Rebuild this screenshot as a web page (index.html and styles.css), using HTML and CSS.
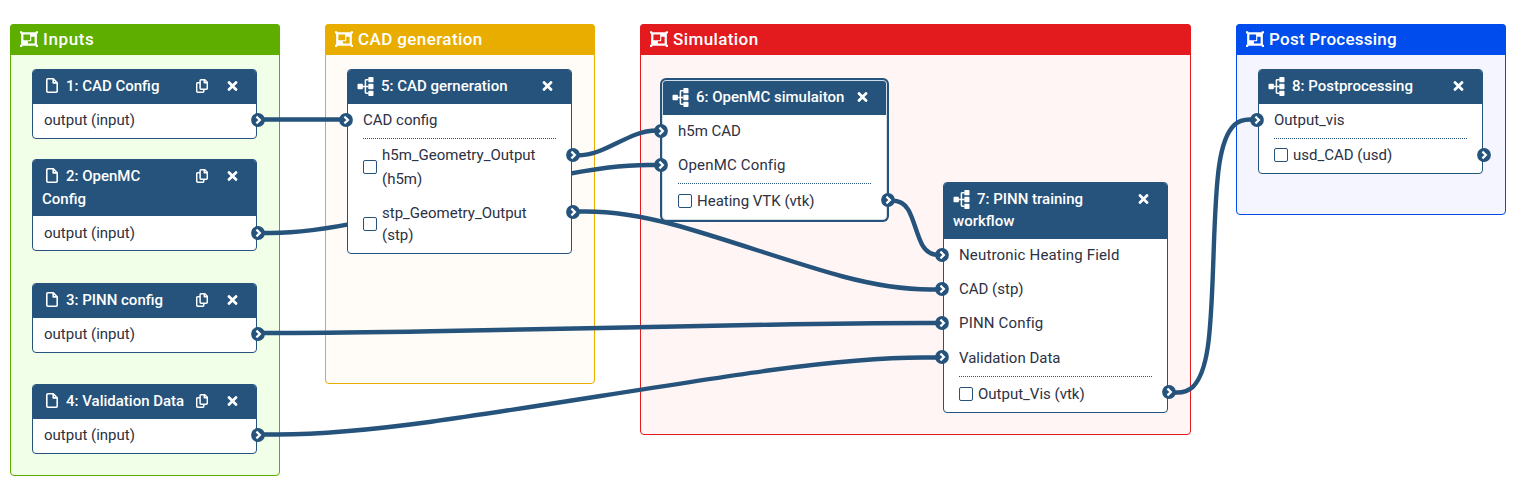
FILE: index.html
```
<!DOCTYPE html>
<html lang="en">
<head>
<meta charset="utf-8">
<title>Workflow editor</title>
<link rel="stylesheet" href="styles.css">
</head>
<body>
<svg class="defs" aria-hidden="true">
  <symbol id="group" viewBox="0 32 512 448"><path fill="currentColor" d="M480 128V96h20c6.627 0 12-5.373 12-12V44c0-6.627-5.373-12-12-12h-40c-6.627 0-12 5.373-12 12v20H64V44c0-6.627-5.373-12-12-12H12C5.373 32 0 37.373 0 44v40c0 6.627 5.373 12 12 12h20v320H12c-6.627 0-12 5.373-12 12v40c0 6.627 5.373 12 12 12h40c6.627 0 12-5.373 12-12v-20h384v20c0 6.627 5.373 12 12 12h40c6.627 0 12-5.373 12-12v-40c0-6.627-5.373-12-12-12h-20V128zM96 276V140c0-6.627 5.373-12 12-12h168c6.627 0 12 5.373 12 12v136c0 6.627-5.373 12-12 12H108c-6.627 0-12-5.373-12-12zm320 96c0 6.627-5.373 12-12 12H236c-6.627 0-12-5.373-12-12v-52h72c13.255 0 24-10.745 24-24V192h84c6.627 0 12 5.373 12 12v168z"/></symbol>
  <symbol id="file" viewBox="0 0 12 15"><path fill="none" stroke="currentColor" stroke-width="1.600" stroke-linejoin="round" d="M1.900.8H7.300L11.200 4.700V13.200Q11.200 14.200 10.200 14.200H1.900Q.8 14.200.8 13.200V1.800Q.8.8 1.900.8ZM7.200 1V4.900H11"/></symbol>
  <symbol id="copy" viewBox="0 0 12 14"><path fill="none" stroke="currentColor" stroke-width="1.500" stroke-linejoin="round" d="M5 .8H8.800L11.300 3.300V9.300Q11.300 10.200 10.400 10.200H5Q4.100 10.200 4.100 9.300V1.700Q4.100.8 5 .8ZM8.300 1V3.800H11M4 3.700H1.600Q.7 3.700.7 4.600V12.300Q.7 13.200 1.600 13.200H6.900Q7.800 13.200 7.800 12.300V10.300"/></symbol>
  <symbol id="times" viewBox="0 80 352 352"><path fill="currentColor" d="M242.720 256l100.070-100.070c12.280-12.280 12.280-32.190 0-44.480l-22.240-22.240c-12.280-12.280-32.190-12.280-44.480 0L176 189.280 75.930 89.210c-12.280-12.280-32.190-12.280-44.480 0L9.210 111.450c-12.280 12.280-12.280 32.190 0 44.480L109.280 256 9.210 356.070c-12.280 12.280-12.280 32.190 0 44.480l22.240 22.240c12.280 12.280 32.200 12.280 44.480 0L176 322.720l100.070 100.070c12.280 12.280 32.200 12.280 44.480 0l22.240-22.240c12.280-12.280 12.280-32.190 0-44.480L242.720 256z"/></symbol>
  <symbol id="tree" viewBox="0 0 16 19"><g fill="currentColor"><rect x="0" y="6.800" width="5.400" height="5.400" rx=".9"/><rect x="10.800" y="0" width="5.200" height="5.300" rx=".9"/><rect x="10.800" y="6.800" width="5.200" height="5.400" rx=".9"/><rect x="10.800" y="13.700" width="5.200" height="5.300" rx=".9"/></g><path fill="none" stroke="currentColor" stroke-width="1.500" d="M5 9.500H11M11 2.700H8.600Q7.900 2.700 7.900 3.400V15.600Q7.900 16.300 8.600 16.300H11"/></symbol>
  <symbol id="port" viewBox="0 0 14 14"><circle cx="7" cy="7" r="6.900" fill="#25537b"/><path fill="none" stroke="#fff" stroke-width="2.200" d="M5.400 3.600L8.900 7L5.400 10.400"/></symbol>
</svg>
<main class="canvas">
  <section class="frame inputs"><h2><svg><use href="#group"/></svg><span>Inputs</span></h2></section>
  <section class="frame cad"><h2><svg><use href="#group"/></svg><span>CAD generation</span></h2></section>
  <section class="frame simulation"><h2><svg><use href="#group"/></svg><span>Simulation</span></h2></section>
  <section class="frame post"><h2><svg><use href="#group"/></svg><span>Post Processing</span></h2></section>

  <svg class="edges" viewBox="0 0 1524 504">
    <path d="M258 119.500H346"/>
    <path d="M258 233H270.500C283 233 308 233 362.700 221.700C417.300 210.300 501.700 187.700 556.300 176.300C611 165 636 165 648.500 165H661"/>
    <path d="M573 155.500H576.700C580.300 155.500 587.700 155.500 598.700 151.300C609.700 147.200 624.300 138.800 635.300 134.700C646.300 130.500 653.700 130.500 657.300 130.500H661"/>
    <path d="M573 211.500H585.800C598.700 211.500 624.300 211.500 673.200 224.500C722 237.500 794 263.500 842.800 276.500C891.700 289.500 917.300 289.500 930.200 289.500H943"/>
    <path d="M258 333H277.700C297.300 333 336.700 333 431.200 331.300C525.700 329.700 675.300 326.300 769.800 324.700C864.300 323 903.700 323 923.300 323H943"/>
    <path d="M258 434.500H277.700C297.300 434.500 336.700 434.500 431.200 421.700C525.700 408.800 675.300 383.200 769.800 370.300C864.300 357.500 903.700 357.500 923.300 357.500H943"/>
    <path d="M888 200.500H891.700C895.300 200.500 902.700 200.500 908.200 209.600C913.700 218.700 917.300 236.800 922.800 245.900C928.300 255 935.700 255 939.300 255H943"/>
    <path d="M1169 392.500H1177C1185 392.500 1201 392.500 1207.800 347C1214.700 301.500 1212.300 210.500 1219.200 165C1226 119.500 1242 119.500 1250 119.500H1258"/>
  </svg>

  <article class="node source n1">
    <header><div class="tools"><svg class="copy"><use href="#copy"/></svg><svg class="times"><use href="#times"/></svg></div><svg class="file"><use href="#file"/></svg><span>1: CAD Config</span></header>
    <div class="row"><span>output (input)</span><svg class="port out"><use href="#port"/></svg></div>
  </article>
  <article class="node source two-line n2">
    <header><div class="tools"><svg class="copy"><use href="#copy"/></svg><svg class="times"><use href="#times"/></svg></div><svg class="file"><use href="#file"/></svg><span>2: OpenMC<br>Config</span></header>
    <div class="row"><span>output (input)</span><svg class="port out"><use href="#port"/></svg></div>
  </article>
  <article class="node source n3">
    <header><div class="tools"><svg class="copy"><use href="#copy"/></svg><svg class="times"><use href="#times"/></svg></div><svg class="file"><use href="#file"/></svg><span>3: PINN config</span></header>
    <div class="row"><span>output (input)</span><svg class="port out"><use href="#port"/></svg></div>
  </article>
  <article class="node source n4">
    <header><div class="tools"><svg class="copy"><use href="#copy"/></svg><svg class="times"><use href="#times"/></svg></div><svg class="file"><use href="#file"/></svg><span>4: Validation Data</span></header>
    <div class="row"><span>output (input)</span><svg class="port out"><use href="#port"/></svg></div>
  </article>

  <article class="node n5">
    <header><div class="tools"><svg class="times"><use href="#times"/></svg></div><svg class="tree"><use href="#tree"/></svg><span>5: CAD gerneration</span></header>
    <div class="row"><svg class="port in"><use href="#port"/></svg><span>CAD config</span></div>
    <hr>
    <div class="row tall"><i class="check"></i><span>h5m_Geometry_Output<br>(h5m)</span><svg class="port out"><use href="#port"/></svg></div>
    <div class="row tall second"><i class="check"></i><span>stp_Geometry_Output<br>(stp)</span><svg class="port out"><use href="#port"/></svg></div>
  </article>

  <article class="node active n6">
    <header><div class="tools"><svg class="times"><use href="#times"/></svg></div><svg class="tree"><use href="#tree"/></svg><span>6: OpenMC simulaiton</span></header>
    <div class="row"><svg class="port in"><use href="#port"/></svg><span>h5m CAD</span></div>
    <div class="row"><svg class="port in"><use href="#port"/></svg><span class="wide">OpenMC Config</span></div>
    <hr>
    <div class="row last"><i class="check"></i><span>Heating VTK (vtk)</span><svg class="port out"><use href="#port"/></svg></div>
  </article>

  <article class="node two-line n7">
    <header><div class="tools"><svg class="times"><use href="#times"/></svg></div><svg class="tree"><use href="#tree"/></svg><span>7: PINN training<br>workflow</span></header>
    <div class="row"><svg class="port in"><use href="#port"/></svg><span class="wide">Neutronic Heating Field</span></div>
    <div class="row"><svg class="port in"><use href="#port"/></svg><span>CAD (stp)</span></div>
    <div class="row"><svg class="port in"><use href="#port"/></svg><span class="wide">PINN Config</span></div>
    <div class="row"><svg class="port in"><use href="#port"/></svg><span>Validation Data</span></div>
    <hr>
    <div class="row last"><i class="check"></i><span>Output_Vis (vtk)</span><svg class="port out"><use href="#port"/></svg></div>
  </article>

  <article class="node n8">
    <header><div class="tools"><svg class="times"><use href="#times"/></svg></div><svg class="tree"><use href="#tree"/></svg><span>8: Postprocessing</span></header>
    <div class="row"><svg class="port in"><use href="#port"/></svg><span>Output_vis</span></div>
    <hr>
    <div class="row"><i class="check"></i><span>usd_CAD (usd)</span><svg class="port out"><use href="#port"/></svg></div>
  </article>
</main>
</body>
</html>
```
FILE: styles.css
```
* { box-sizing: border-box; }
body { margin: 0; background: #fff; font-family: Roboto, "Liberation Sans", sans-serif; font-size: 15px; color: #2c3143; }
.defs { position: absolute; width: 0; height: 0; }
.canvas { position: relative; width: 1524px; height: 504px; overflow: hidden; }

.frame { position: absolute; top: 24px; width: 270px; border: 1px solid; border-radius: 4px; }
.frame h2 { display: flex; align-items: center; gap: 5px; height: 31px; margin: -1px -1px 0; padding: 0 10px 1px; border-radius: 4px 4px 0 0; color: #fff; font-size: 17px; font-weight: 500; letter-spacing: .4px; }
.frame h2 svg { width: 18px; height: 16px; }
.inputs { left: 10px; height: 452px; border-color: #5eae00; background: #f1ffe8; }
.inputs h2 { background: #5eae00; }
.inputs h2 span { letter-spacing: .6px; }
.cad { left: 325px; height: 360px; border-color: #e9ad00; background: #fffbf6; }
.cad h2 { background: #e9ad00; }
.simulation { left: 640px; width: 551px; height: 411px; border-color: #e31a1e; background: #fff5f4; }
.simulation h2 { background: #e31a1e; }
.post { left: 1236px; height: 191px; border-color: #004cec; background: #f4f5ff; }
.post h2 { background: #004cec; }
.post h2 span { letter-spacing: .25px; }

.edges { position: absolute; left: 0; top: 0; width: 1524px; height: 504px; fill: none; stroke: #25537b; stroke-width: 4.4px; }

.node { position: absolute; width: 225px; border: 1px solid #25537b; border-radius: 4px; background: #fff; }
.node header { height: 34px; padding: 5px 9px 0; border-radius: 3px 3px 0 0; background: #25537b; color: #fff; font-weight: 500; line-height: 23px; }
.node.two-line header { height: 56px; }
.tools { float: right; display: flex; align-items: center; gap: 19px; height: 21px; padding-right: 9px; }
.copy { width: 12px; height: 14px; }
.times { width: 11px; height: 10px; }
.file { width: 12px; height: 15px; margin: 0 8px 0 4px; vertical-align: -2px; }
.tree { width: 17px; height: 19px; margin-right: 7px; vertical-align: -5px; }
.row { position: relative; display: flex; align-items: center; height: 34.200px; padding: 0 15px 2px; }
.last { padding-bottom: 0; }
.source .row { padding-left: 11px; height: 33px; }
.n2 .row { padding-bottom: 0; }
.node hr { height: 0; margin: 0 15px; border: 0; border-top: 1px dotted #25537b; }
.check { flex: none; width: 14px; height: 14px; margin-right: 5px; border: 1.500px solid #25537b; border-radius: 2px; background: #fff; }
.tall { height: 58px; line-height: 24px; }
.second { height: 56px; line-height: 22px; }
.port { position: absolute; top: 8.500px; width: 14px; height: 14px; }
.n2 .port { top: 9.500px; }
.tall .port { top: 9px; }
.second .port { top: 8px; }
.out { right: -9px; }
.in { left: -9px; }
.wide { letter-spacing: .17px; }

.n1 { left: 32px; top: 69px; height: 70px; }
.n2 { left: 32px; top: 159px; height: 92px; }
.n3 { left: 32px; top: 283px; height: 70px; }
.n4 { left: 32px; top: 384px; height: 70px; }
.n5 { left: 347px; top: 69px; height: 185px; }
.n6 { left: 662px; top: 80px; height: 140px; }
.n7 { left: 943px; top: 182px; height: 231px; }
.n7 header { line-height: 22px; }
.n8 { left: 1258px; top: 69px; height: 105px; }
.active { border-color: #d3dde6; box-shadow: 0 0 0 2px #25537b; }
```
